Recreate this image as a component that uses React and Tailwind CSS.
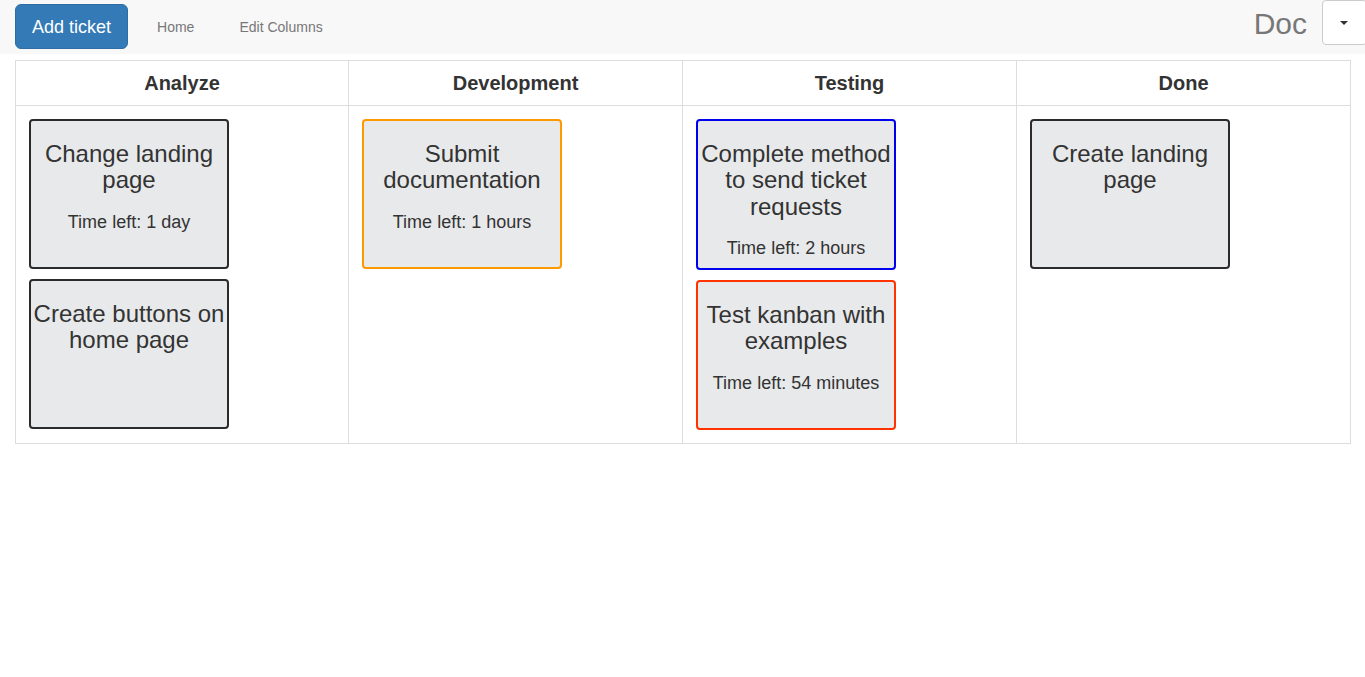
import React from 'react';

const columns = [
  {
    name: 'Analyze',
    tickets: [
      { title: 'Change landing page', time: 'Time left: 1 day', color: 'border-[#2b2b2e]' },
      { title: 'Create buttons on home page', time: null, color: 'border-[#2b2b2e]' },
    ],
  },
  {
    name: 'Development',
    tickets: [
      { title: 'Submit documentation', time: 'Time left: 1 hours', color: 'border-[#ff9900]' },
    ],
  },
  {
    name: 'Testing',
    tickets: [
      { title: 'Complete method to send ticket requests', time: 'Time left: 2 hours', color: 'border-[#0000ee]' },
      { title: 'Test kanban with examples', time: 'Time left: 54 minutes', color: 'border-[#ff3300]' },
    ],
  },
  {
    name: 'Done',
    tickets: [
      { title: 'Create landing page', time: null, color: 'border-[#2b2b2e]' },
    ],
  },
];

const Ticket = ({ ticket }) => (
  <div
    className={`m-[5px] w-[200px] min-h-[150px] border-2 rounded-[4px] bg-[#e8e9ea] text-center px-[2px] pb-[6px] ${ticket.color}`}
  >
    <h3 className="mt-[20px] text-[24px] leading-[26.4px] text-[#333]">{ticket.title}</h3>
    {ticket.time && (
      <p className="mt-[16px] text-[18px] leading-[25.7px] text-[#333]">{ticket.time}</p>
    )}
  </div>
);

export default function App() {
  return (
    <div className="min-h-screen bg-white text-[#333] overflow-hidden" style={{ fontFamily: '"Liberation Sans", Arial, sans-serif' }}>
      {/* navbar */}
      <nav className="h-[54px] bg-[#f8f8f8] flex items-start">
        <button className="ml-[15px] mt-[4px] h-[45px] px-[16px] text-[18px] leading-[24px] bg-[#337ab7] border border-[#2e6da4] rounded-[6px] text-white">
          Add ticket
        </button>
        <a className="ml-[29px] mt-[17px] text-[14px] leading-[20px] text-[#777]">Home</a>
        <a className="ml-[45px] mt-[17px] text-[14px] leading-[20px] text-[#777]">Edit Columns</a>
        <div className="ml-auto mr-[-2px] flex items-start">
          <span className="mt-[6px] text-[30px] leading-[36px] text-[#777]">Doc</span>
          <button className="ml-[15px] w-[45px] h-[45px] bg-white border border-[#ccc] rounded-[4px] flex items-center justify-center pr-[2px]">
            <span className="w-0 h-0 border-l-[4px] border-r-[4px] border-t-[4px] border-l-transparent border-r-transparent border-t-[#333]" />
          </button>
        </div>
      </nav>

      {/* board */}
      <div className="ml-[15px] mr-[14px] mt-[6px] border border-[#ddd] grid grid-cols-[333px_334px_334px_1fr]">
        {columns.map((col, i) => (
          <div
            key={col.name}
            className={`py-[8px] text-center text-[20px] leading-[28px] font-bold border-b border-[#ddd] ${i < 3 ? 'border-r' : ''}`}
          >
            {col.name}
          </div>
        ))}
        {columns.map((col, i) => (
          <div key={col.name + '-body'} className={`p-[8px] flex flex-col items-start border-[#ddd] ${i < 3 ? 'border-r' : ''}`}>
            {col.tickets.map((t) => (
              <Ticket key={t.title} ticket={t} />
            ))}
          </div>
        ))}
      </div>
    </div>
  );
}
